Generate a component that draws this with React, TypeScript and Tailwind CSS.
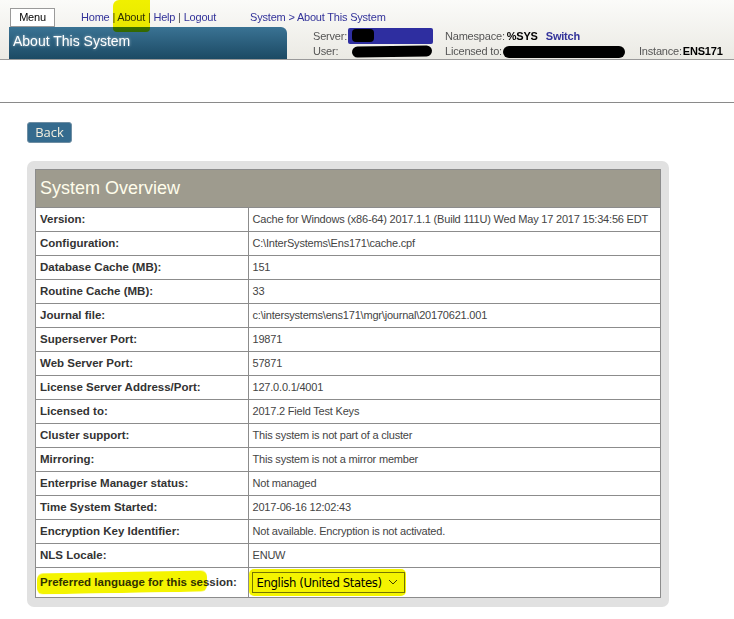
import React from "react";

const rows: [string, string][] = [
  ["Version:", "Cache for Windows (x86-64) 2017.1.1 (Build 111U) Wed May 17 2017 15:34:56 EDT"],
  ["Configuration:", "C:\\InterSystems\\Ens171\\cache.cpf"],
  ["Database Cache (MB):", "151"],
  ["Routine Cache (MB):", "33"],
  ["Journal file:", "c:\\intersystems\\ens171\\mgr\\journal\\20170621.001"],
  ["Superserver Port:", "19871"],
  ["Web Server Port:", "57871"],
  ["License Server Address/Port:", "127.0.0.1/4001"],
  ["Licensed to:", "2017.2 Field Test Keys"],
  ["Cluster support:", "This system is not part of a cluster"],
  ["Mirroring:", "This system is not a mirror member"],
  ["Enterprise Manager status:", "Not managed"],
  ["Time System Started:", "2017-06-16 12:02:43"],
  ["Encryption Key Identifier:", "Not available. Encryption is not activated."],
  ["NLS Locale:", "ENUW"],
];

function Header() {
  return (
    <div className="relative h-[60px] border-b border-[#9a9a9a] bg-gradient-to-b from-[#fbfbf9] to-[#ebeae4] text-[11px] tracking-[-0.2px]">
      <div className="flex items-center pt-[8px] pl-[10px] h-[27px]">
        <div className="w-[45px] h-[19px] bg-white border border-[#9a9a9a] flex items-center justify-center text-black text-[11px]">
          Menu
        </div>
        <div className="ml-[26px] text-[#33339a]">
          <span>Home</span>
          <span className="text-[#555]"> | </span>
          <span>About</span>
          <span className="text-[#555]"> | </span>
          <span>Help</span>
          <span className="text-[#555]"> | </span>
          <span>Logout</span>
        </div>
        <div className="ml-[34px] text-[#33339a]">System &gt; About This System</div>
      </div>
      <div className="flex">
        <div className="ml-[9px] w-[278px] h-[32px] rounded-tr-[6px] bg-gradient-to-b from-[#3a7394] to-[#1c4a64] text-white text-[14px] tracking-normal pl-[4px] pt-[4px] [text-shadow:0_0_3px_rgba(255,255,255,0.6)]">
          About This System
        </div>
        <div className="ml-[26px] grid grid-cols-[132px_194px_auto] text-[#555] leading-[15px] pt-[1px]">
          <div className="flex items-center">
            <span>Server:</span>
            <span className="ml-[1px] inline-block w-[85px] h-[16px] bg-[#2e2ea0] rounded-[2px] relative">
              <span className="absolute left-[4px] top-[1px] w-[22px] h-[13px] bg-black rounded-[4px]" />
            </span>
          </div>
          <div className="flex items-center">
            <span>Namespace:</span>
            <span className="ml-[2px] font-bold text-black">%SYS</span>
            <span className="ml-[8px] font-bold text-[#33339a]">Switch</span>
          </div>
          <div />
          <div className="flex items-center">
            <span>User:</span>
            <span className="ml-[14px] inline-block w-[80px] h-[11px] bg-black rounded-[6px] -rotate-1" />
          </div>
          <div className="flex items-center">
            <span>Licensed to:</span>
            <span className="ml-[1px] inline-block w-[122px] h-[12px] bg-black rounded-[6px]" />
          </div>
          <div className="flex items-center">
            <span>Instance:</span>
            <span className="ml-[1px] font-bold text-black">ENS171</span>
          </div>
        </div>
      </div>
      <div className="absolute left-[113px] top-0 w-[37px] h-[32px] bg-[#f4f400] mix-blend-multiply rounded-b-[4px] rounded-tl-[6px]" />
    </div>
  );
}

export default function App() {
  return (
    <div className="min-h-[619px] bg-white font-['Liberation_Sans',Arial,sans-serif] text-[#333]">
      <Header />
      <div className="h-[43px] border-b border-[#8a8a8a]" />
      <div className="pl-[27px] pt-[19px] flex">
        <div className="w-[45px] h-[21px] rounded-[3px] bg-[#356b8e] border border-[#6f8ea3] text-[#f4efdf] text-[13px] font-['Open_Sans',sans-serif] flex items-center justify-center">
          Back
        </div>
      </div>
      <div className="ml-[27px] mt-[18px] w-[642px] bg-[#e1e1e1] rounded-[7px] p-[8px] pb-[9px]">
        <div className="relative bg-white border border-[#8c8c8c]">
          <div className="h-[37px] bg-[#9e9b8e] text-[#fffdeb] text-[18px] pl-[4px] flex items-center">
            System Overview
          </div>
          <table className="w-full border-collapse">
            <tbody>
              {rows.map(([k, v]) => (
                <tr key={k} className="h-[24px]">
                  <td className="w-[212px] border-t border-r border-[#8c8c8c] pl-[4px] font-bold text-[11.5px] text-[#333]">{k}</td>
                  <td className="border-t border-[#8c8c8c] pl-[4px] text-[11px] tracking-[-0.2px] text-[#444] whitespace-nowrap">{v}</td>
                </tr>
              ))}
              <tr className="h-[29px]">
                <td className="w-[212px] border-t border-r border-[#8c8c8c] pl-[4px] font-bold text-[11.5px] text-[#333]">
                  Preferred language for this session:
                </td>
                <td className="border-t border-[#8c8c8c] pl-[3px]">
                  <div className="w-[153px] h-[21px] border border-[#7a7a7a] flex items-center justify-between px-[4px] text-[13px] text-black font-['DejaVu_Sans_Condensed','DejaVu_Sans',sans-serif] tracking-[-0.4px]">
                    <span>English (United States)</span>
                    <svg width="10" height="6" viewBox="0 0 10 6" className="mr-[2px]">
                      <path d="M1 1 L5 5 L9 1" fill="none" stroke="#444" strokeWidth="1" />
                    </svg>
                  </div>
                </td>
              </tr>
            </tbody>
          </table>
          <div className="absolute left-[1px] bottom-[4px] w-[170px] h-[21px] bg-[#f4f400] mix-blend-multiply rounded-[6px] -skew-y-1" />
          <div className="absolute left-[213px] bottom-[1px] w-[157px] h-[27px] bg-[#f4f400] mix-blend-multiply rounded-[5px]" />
        </div>
      </div>
    </div>
  );
}
